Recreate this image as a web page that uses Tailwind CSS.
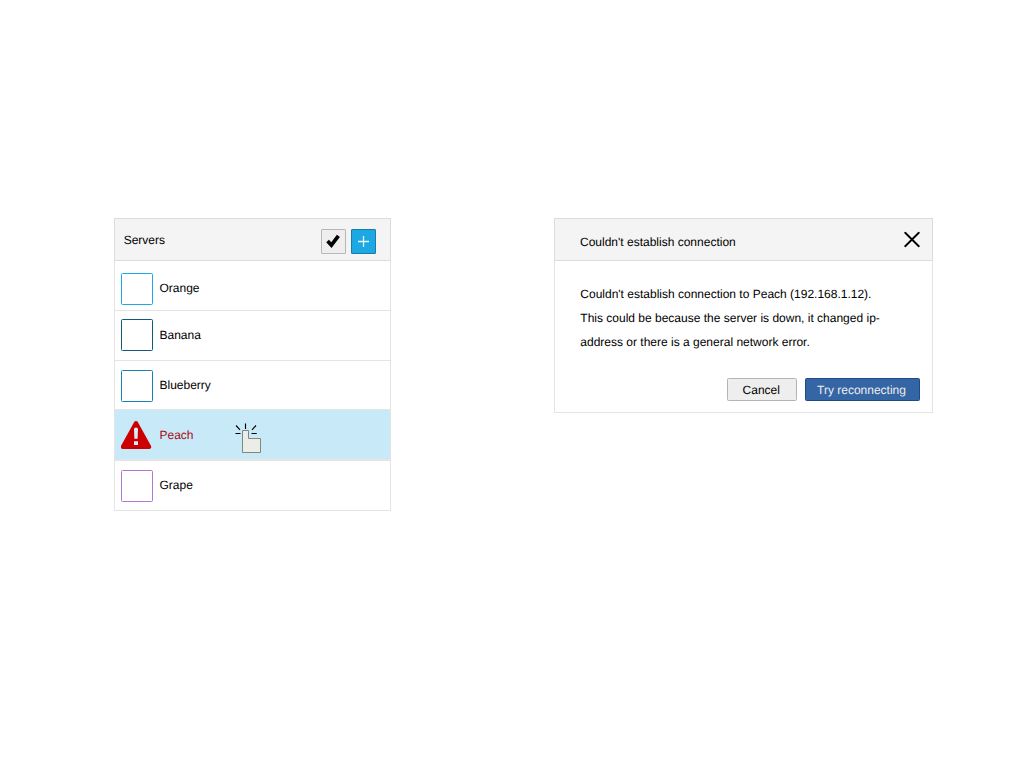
<!DOCTYPE html>
<html lang="en">
<head>
<meta charset="utf-8">
<title>Servers</title>
<script src="https://cdn.jsdelivr.net/npm/@tailwindcss/browser@4"></script>
</head>
<body class="h-screen overflow-hidden bg-white font-['Liberation_Sans',Arial,sans-serif] text-[12px] text-black [text-rendering:geometricPrecision]">
<main class="flex items-start gap-[163px] pl-[114px] pt-[218px]">
  <section class="w-[277px] border border-[#e4e4e4]">
    <header class="-mx-px -mt-px flex h-[43px] items-start border border-[#dcdcdc] bg-[#f4f4f4] pl-[8.7px] pr-[14px]">
      <h1 class="mt-3 leading-[18px]">Servers</h1>
      <div class="ml-auto mt-[10px] flex gap-[5px]">
        <button class="grid size-[25px] place-items-center rounded-[1px] border border-[#b8b8b8] bg-[#eeeeee]" aria-label="Confirm">
          <svg class="size-[23px]" viewBox="0 0 23 23"><path d="M5.6 11 9.4 15.2 16.4 5.8" fill="none" stroke="#000" stroke-width="3.7"/></svg>
        </button>
        <button class="grid size-[25px] place-items-center rounded-[1px] border border-[#1b7ba6] bg-[#1ba8e3]" aria-label="Add">
          <svg class="size-[23px]" viewBox="0 0 23 23"><path d="M6 11.5H17M11.5 6V17" fill="none" stroke="#fff" stroke-opacity=".9" stroke-width="1.3"/></svg>
        </button>
      </div>
    </header>
    <ul>
      <li class="flex h-[50px] items-start border-b border-[#e4e4e4] pl-[6px]">
        <span class="mt-3 size-8 rounded-[1.5px] border border-[#1aa9e6] bg-white"></span>
        <span class="ml-[6.5px] mt-[18px] leading-[18px]">Orange</span>
      </li>
      <li class="flex h-[50px] items-start border-b border-[#e4e4e4] pl-[6px]">
        <span class="mt-2 size-8 rounded-[1.5px] border border-[#14587a] bg-white"></span>
        <span class="ml-[6.5px] mt-[15px] leading-[18px]">Banana</span>
      </li>
      <li class="flex h-[49px] items-start border-b border-[#e4e4e4] pl-[6px]">
        <span class="mt-[9px] size-8 rounded-[1.5px] border border-[#1682b3] bg-white"></span>
        <span class="ml-[6.5px] mt-[15px] leading-[18px]">Blueberry</span>
      </li>
      <li class="relative flex h-[51px] items-start border-b-2 border-[#e4e4e4] bg-[#c8e9f8] pl-[6px] text-[#aa0a14]">
        <svg class="mt-[10px] size-8" viewBox="0 0 32 32">
          <path d="M15 3.2 28 26.8H2Z" fill="#c00" stroke="#c00" stroke-width="4.4" stroke-linejoin="round"/>
          <path d="M13 9.3Q13 7.6 15 7.6T17 9.3L16.6 18.8H13.4ZM13 21.2H17V25H13Z" fill="#d4effa"/>
        </svg>
        <span class="ml-[6.5px] mt-4 leading-[18px]">Peach</span>
        <svg class="absolute left-[115px] top-[10px] h-9 w-9" viewBox="0 0 36 36">
          <path d="M12.5 10.5H18.5V18.5H30.5V32.5H12.5Z" fill="#edede8" stroke="#858580"/>
          <path d="M15.5 3.5V9M6 5.5 10 9.8M5.5 13.5H10.5M26 5.5 22 9.8M21.5 13.5H26.7" fill="none" stroke="#000" stroke-width="1.15"/>
        </svg>
      </li>
      <li class="flex h-[49px] items-start pl-[6px]">
        <span class="mt-[9px] size-8 rounded-[1.5px] border border-[#b377d1] bg-white"></span>
        <span class="ml-[6.5px] mt-[15px] leading-[18px]">Grape</span>
      </li>
    </ul>
  </section>

  <section class="h-[195px] w-[379px] border border-[#e4e4e4]">
    <header class="-mx-px -mt-px flex h-[43px] items-start border border-[#dcdcdc] bg-[#f4f4f4] pl-[25px] pr-[12px]">
      <h2 class="mt-[14px] leading-[18px]">Couldn't establish connection</h2>
      <button class="ml-auto mt-[12px]" aria-label="Close">
        <svg class="h-[17px] w-[16px]" viewBox="0 0 16 17"><path d="M1.2 1.8 14.8 15.2M14.8 1.8 1.2 15.2" fill="none" stroke="#000" stroke-width="1.9" stroke-linecap="round"/></svg>
      </button>
    </header>
    <p class="mt-[21px] whitespace-nowrap pl-[25.3px] leading-[24px]">Couldn't establish connection to Peach (192.168.1.12).<br>This could be because the server is down, it changed ip-<br>address or there is a general network error.</p>
    <footer class="mt-[24px] flex justify-end gap-2 pr-3">
      <button class="h-[23px] w-[70px] rounded-[1.5px] border border-[#b4b4b4] bg-[#eeeeee] pr-[1.5px] leading-[22px] [text-rendering:geometricPrecision]">Cancel</button>
      <button class="h-[23px] w-[115px] rounded-[1.5px] border border-[#204a87] bg-[#3465a4] pr-[2px] leading-[22px] text-[#eeeeee] [text-rendering:geometricPrecision]">Try reconnecting</button>
    </footer>
  </section>
</main>
</body>
</html>
